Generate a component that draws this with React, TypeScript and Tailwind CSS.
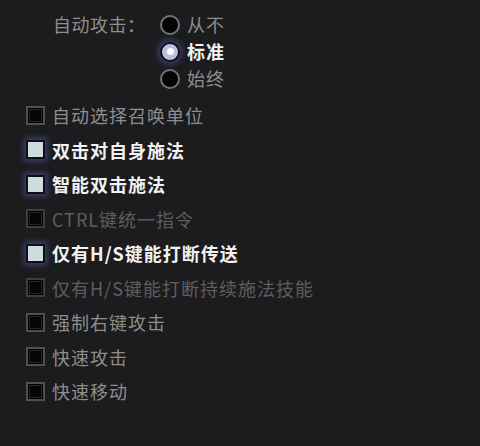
import React from 'react';

type Item = { label: string; state: 'on' | 'off' | 'disabled' };

const items: Item[] = [
  { label: '自动选择召唤单位', state: 'off' },
  { label: '双击对自身施法', state: 'on' },
  { label: '智能双击施法', state: 'on' },
  { label: 'CTRL键统一指令', state: 'disabled' },
  { label: '仅有H/S键能打断传送', state: 'on' },
  { label: '仅有H/S键能打断持续施法技能', state: 'disabled' },
  { label: '强制右键攻击', state: 'off' },
  { label: '快速攻击', state: 'off' },
  { label: '快速移动', state: 'off' },
];

const radios = [
  { label: '从不', selected: false },
  { label: '标准', selected: true },
  { label: '始终', selected: false },
];

function Radio({ selected }: { selected: boolean }) {
  if (selected) {
    return (
      <span className="w-[20px] h-[20px] rounded-full border-2 border-[#10101c] bg-[#b9c1dc] shadow-[0_0_6px_2px_rgba(96,96,180,0.55)] flex items-center justify-center">
        <span className="w-[7px] h-[7px] rounded-full bg-white" />
      </span>
    );
  }
  return <span className="w-[20px] h-[20px] rounded-full border-2 border-[#747474] bg-[#050505]" />;
}

function Box({ state }: { state: Item['state'] }) {
  if (state === 'on') {
    return (
      <span className="w-[19px] h-[19px] shrink-0 border-2 border-[#0e0e18] bg-[#cfdcdc] shadow-[0_0_6px_2px_rgba(96,96,180,0.55)]" />
    );
  }
  return (
    <span
      className={`w-[19px] h-[19px] shrink-0 border-2 bg-[#060606] shadow-[inset_0_0_0_1px_#000,inset_0_0_0_2px_#262626] ${
        state === 'disabled' ? 'border-[#3e3e3e]' : 'border-[#505050]'
      }`}
    />
  );
}

export default function App() {
  return (
    <div
      className="w-[480px] h-[446px] bg-[#1c1c1e] overflow-hidden"
      style={{ fontFamily: '"Noto Sans CJK SC", "Noto Sans", sans-serif' }}
    >
      <div className="flex pt-[11px] pl-[53px]">
        <div className="h-[27px] flex items-center text-[18px] tracking-[0.5px] text-[#8e8e8e] w-[107px]">
          自动攻击：
        </div>
        <div className="flex flex-col">
          {radios.map((r) => (
            <div key={r.label} className="h-[27px] flex items-center gap-[7px]">
              <Radio selected={r.selected} />
              <span
                className={`text-[18px] tracking-[1px] ${
                  r.selected ? 'font-bold text-[#f2f2f2]' : 'text-[#8e8e8e]'
                }`}
              >
                {r.label}
              </span>
            </div>
          ))}
        </div>
      </div>

      <div className="flex flex-col pl-[26px] pt-[6px]">
        {items.map((it) => (
          <div key={it.label} className="h-[34.5px] flex items-center gap-[7px]">
            <Box state={it.state} />
            <span
              className={`text-[18px] tracking-[1px] leading-none ${
                it.state === 'on'
                  ? 'font-bold text-[#f2f2f2]'
                  : it.state === 'disabled'
                  ? 'text-[#5e5e5e]'
                  : 'text-[#8e8e8e]'
              }`}
            >
              {it.label}
            </span>
          </div>
        ))}
      </div>
    </div>
  );
}
